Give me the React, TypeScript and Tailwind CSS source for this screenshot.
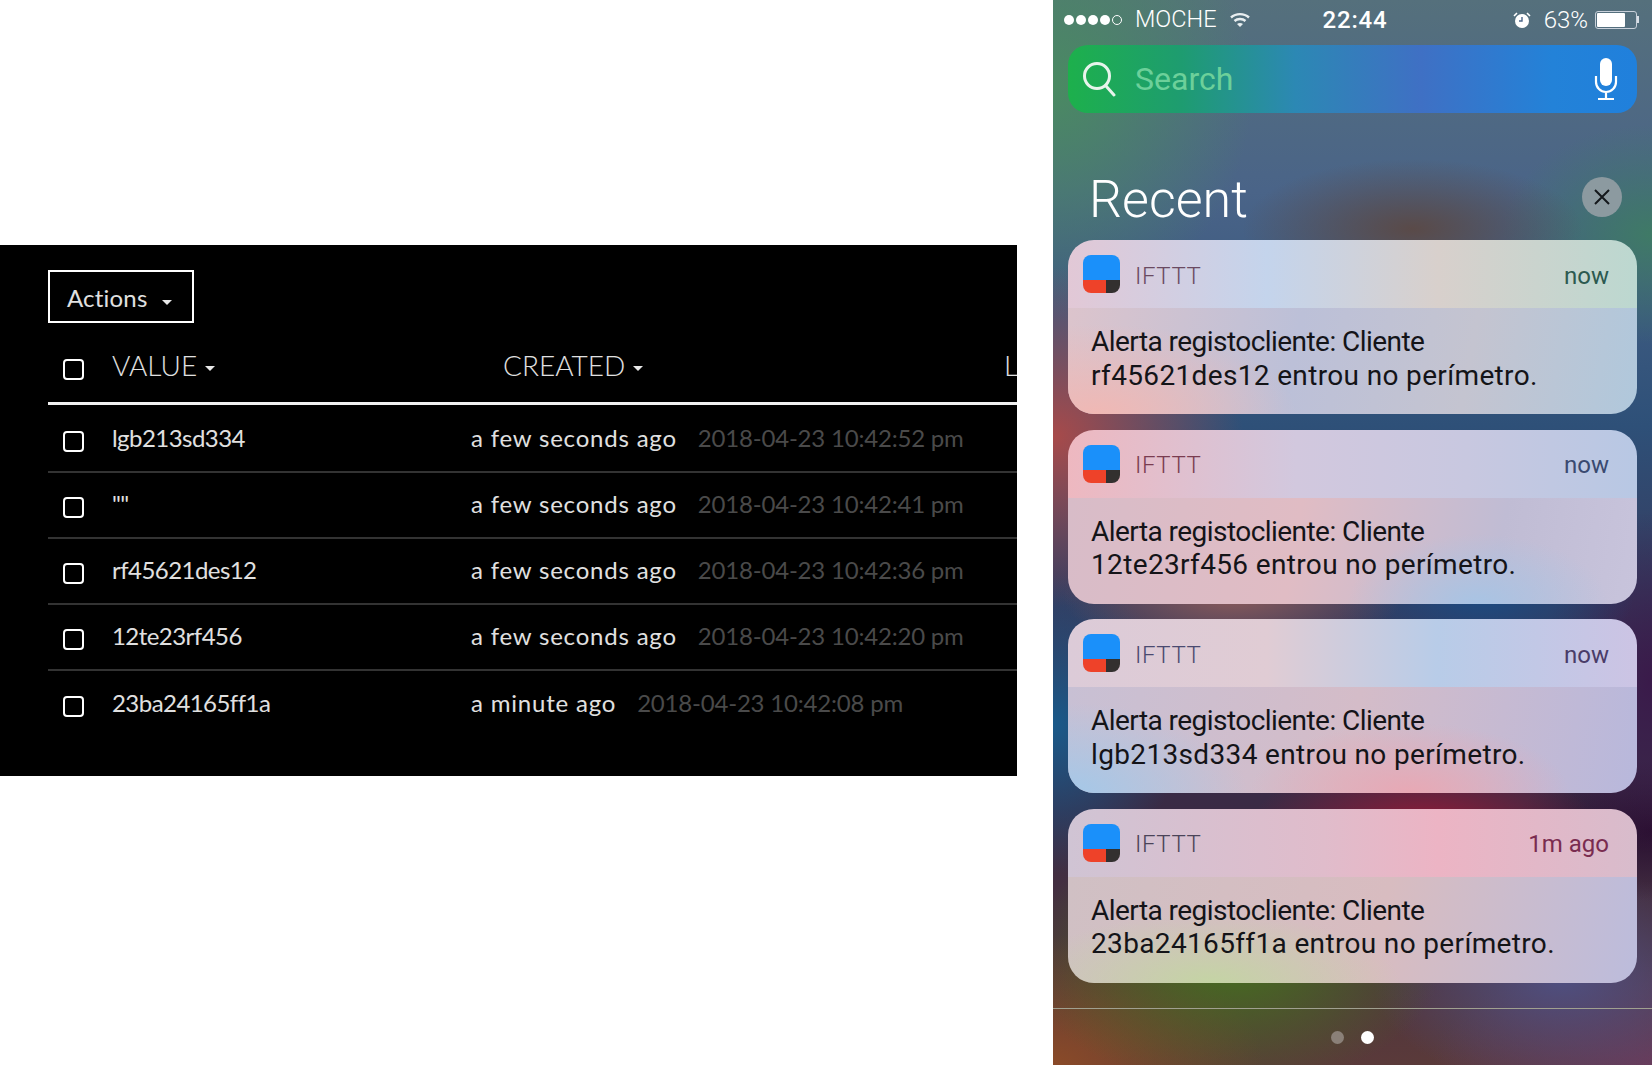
import clsx from 'clsx'

const rows = [
  { value: 'lgb213sd334', ago: 'a few seconds ago', date: '2018-04-23 10:42:52 pm' },
  { value: '""', ago: 'a few seconds ago', date: '2018-04-23 10:42:41 pm' },
  { value: 'rf45621des12', ago: 'a few seconds ago', date: '2018-04-23 10:42:36 pm' },
  { value: '12te23rf456', ago: 'a few seconds ago', date: '2018-04-23 10:42:20 pm' },
  { value: '23ba24165ff1a', ago: 'a minute ago', date: '2018-04-23 10:42:08 pm' },
]

const cards = [
  {
    id: 'rf45621des12',
    time: 'now',
    top: 'bg-[linear-gradient(90deg,#e2c8d6_0%,#c4d4ec_35%,#d8d0cc_65%,#bcd8d0_100%)]',
    body: 'bg-[radial-gradient(ellipse_200px_90px_at_5%_100%,#f0b8b4_0%,transparent_100%),linear-gradient(100deg,#dcc4cc_0%,#bcc0d8_40%,#c4c4d0_70%,#b0c8dc_100%)]',
    timeColor: 'text-[#2c5a50]',
    nameColor: 'text-[#6a4a62]',
  },
  {
    id: '12te23rf456',
    time: 'now',
    top: 'bg-[linear-gradient(90deg,#eeb8c0_0%,#d2c8de_40%,#c8c8e0_70%,#b8c8e4_100%)]',
    body: 'bg-[radial-gradient(ellipse_130px_70px_at_72%_100%,#a8c4e4_0%,transparent_100%),linear-gradient(100deg,#d8bcc8_0%,#e0bcc4_40%,#c0bcd4_75%,#c8c4dc_100%)]',
    timeColor: 'text-[#3a4a70]',
    nameColor: 'text-[#7a3c50]',
  },
  {
    id: 'lgb213sd334',
    time: 'now',
    top: 'bg-[linear-gradient(90deg,#dccbd8_0%,#e0ccd4_35%,#b8cce8_65%,#ccc4e4_100%)]',
    body: 'bg-[radial-gradient(ellipse_160px_70px_at_60%_100%,#e8a8b4_0%,transparent_100%),radial-gradient(ellipse_180px_90px_at_0%_100%,#a4c8e8_0%,transparent_100%),linear-gradient(100deg,#c8c0d4_0%,#d4bcc8_50%,#b8b8dc_100%)]',
    timeColor: 'text-[#4a3c68]',
    nameColor: 'text-[#4a4a70]',
  },
  {
    id: '23ba24165ff1a',
    time: '1m ago',
    top: 'bg-[linear-gradient(90deg,#d0c4d4_0%,#e0bccb_45%,#ecb4c4_65%,#d8bccc_100%)]',
    body: 'bg-[radial-gradient(ellipse_190px_70px_at_25%_100%,#c4d4a4_0%,transparent_100%),linear-gradient(100deg,#d0c0c4_0%,#d8bcc0_55%,#bcbcdc_100%)]',
    timeColor: 'text-[#7a2c50]',
    nameColor: 'text-[#4a4458]',
  },
]

function Caret({ className }: { className: string }) {
  return <span className={clsx('inline-block border-x-[5px] border-t-[5px] border-x-transparent border-t-[#e8e8e8]', className)} />
}

function Checkbox() {
  return <span className="block w-[21px] h-[21px] shrink-0 rounded-[4px] border-2 border-white" />
}

function IftttIcon() {
  return (
    <svg width="37" height="38" viewBox="0 0 37 38" className="shrink-0">
      <defs>
        <clipPath id="app-icon">
          <rect width="37" height="38" rx="8" />
        </clipPath>
      </defs>
      <g clipPath="url(#app-icon)">
        <rect width="37" height="25" fill="#1a90fa" />
        <rect y="25" width="23" height="13" fill="#ee4229" />
        <rect x="23" y="25" width="14" height="13" fill="#33302f" />
      </g>
    </svg>
  )
}

function Notification({ card }: { card: (typeof cards)[number] }) {
  return (
    <div className="rounded-[26px] overflow-hidden h-[174px]">
      <div className={clsx('h-[68px] flex items-center pl-[15px] pr-[28px] pt-[3px]', card.top)}>
        <span className="-mt-[3px]"><IftttIcon /></span>
        <span className={clsx('ml-[15px] text-[24px] tracking-wide font-light', card.nameColor)}>IFTTT</span>
        <span className={clsx('ml-auto text-[24px]', card.timeColor)}>{card.time}</span>
      </div>
      <div className={clsx('h-[106px] pl-[23px] pt-[17px] text-[28px] leading-[33.5px] text-[#141418]', card.body)}>
        <p className="tracking-[-0.55px]">Alerta registocliente: Cliente</p>
        <p className="tracking-[0.35px]">{card.id} entrou no perímetro.</p>
      </div>
    </div>
  )
}

export default function App() {
  return (
    <div className="w-[1652px] h-[1065px] overflow-hidden bg-white flex">
      {/* Dashboard table */}
      <div className="w-[1053px] shrink-0 pt-[245px]">
        <div className="w-[1017px] h-[531px] bg-black overflow-hidden pl-[48px] pt-[25px] font-['Lato',sans-serif] text-[24px] text-[#e0e0e0]">
          <button className="w-[146px] h-[53px] border-2 border-white flex items-center pl-[17px] pt-[2px] tracking-[0.2px] text-[24px] text-[#e0e0e0] whitespace-nowrap">
            Actions
            <Caret className="ml-[14px] mt-[9px]" />
          </button>

          <div className="mt-[15px] h-[67px] pb-[11px] flex items-center border-b-[3px] border-[#f0f0f0] whitespace-nowrap">
            <span className="ml-[15px] mt-[9px]"><Checkbox /></span>
            <span className="ml-[28px] shrink-0 text-[28px] font-light flex items-center w-[391px]">VALUE<Caret className="ml-[8px] mt-[8px]" /></span>
            <span className="shrink-0 text-[28px] font-light flex items-center w-[501px]">CREATED<Caret className="ml-[8px] mt-[8px]" /></span>
            <span className="shrink-0 text-[28px] font-light">L</span>
          </div>

          <div className="mt-[2px]">
            {rows.map((row, i) => (
              <div key={row.value} className={clsx('h-[66px] pb-[3px] flex items-center whitespace-nowrap', i < rows.length - 1 && 'border-b-2 border-[#333]')}>
                <span className="ml-[15px] mt-[8px]"><Checkbox /></span>
                <span className="ml-[28px] w-[359px] shrink-0 tracking-[-0.55px]">{row.value}</span>
                <span className="tracking-[0.8px]">{row.ago}</span>
                <span className="ml-[21px] text-[#4a4a4a] tracking-[-0.2px]">{row.date}</span>
              </div>
            ))}
          </div>
        </div>
      </div>

      {/* Phone notification centre */}
      <div className="w-[599px] shrink-0 px-[15px] font-['Roboto',sans-serif] bg-[radial-gradient(ellipse_170px_70px_at_60%_21.5%,#5a4a48_0%,transparent_100%),radial-gradient(ellipse_150px_110px_at_100%_22%,#3f7a66_0%,transparent_100%),radial-gradient(ellipse_190px_170px_at_0%_41%,#a84a4a_0%,transparent_100%),radial-gradient(ellipse_170px_60px_at_30%_56%,#8a5a5a_0%,transparent_100%),radial-gradient(ellipse_130px_150px_at_0%_68%,#1a5a8a_0%,transparent_100%),radial-gradient(ellipse_150px_70px_at_72%_56%,#1c4a80_0%,transparent_100%),radial-gradient(ellipse_110px_170px_at_100%_64%,#3a1a4a_0%,transparent_100%),radial-gradient(ellipse_170px_60px_at_62%_77%,#8a1c38_0%,transparent_100%),radial-gradient(ellipse_140px_70px_at_100%_78%,#2a0f30_0%,transparent_100%),radial-gradient(ellipse_210px_130px_at_30%_90%,#46701e_0%,transparent_100%),radial-gradient(ellipse_210px_130px_at_0%_100%,#8a4a28_0%,transparent_100%),radial-gradient(ellipse_190px_110px_at_85%_92%,#4f4f80_0%,transparent_100%),radial-gradient(ellipse_220px_110px_at_100%_100%,#6a3a58_0%,transparent_100%),radial-gradient(ellipse_200px_230px_at_0%_8%,#4a8a62_0%,transparent_100%),linear-gradient(180deg,#55707c_0%,#4a6488_18%,#2e5078_40%,#3a3050_65%,#3a2a44_76%,#5a3a3a_100%)]">
        <div className="h-[45px] pb-[6px] -ml-[4px] -mr-[2px] flex items-center text-white whitespace-nowrap">
          <span className="flex items-center gap-[2px]">
            {[0, 1, 2, 3].map(i => <span key={i} className="w-[10px] h-[10px] rounded-full bg-white" />)}
            <span className="w-[10px] h-[10px] rounded-full border border-white" />
          </span>
          <span className="ml-[13px] text-[23.5px] font-light">MOCHE</span>
          <svg width="20" height="16" viewBox="0 0 20 16" className="ml-[13px]" fill="none" stroke="#e8eef0" strokeWidth="2.4">
            <path d="M1 5.5C6 1 14 1 19 5.5" />
            <path d="M4.5 9c3-2.6 8-2.6 11 0" />
            <path d="M10 15l-3-3c1.7-1.3 4.3-1.3 6 0z" fill="#e8eef0" stroke="none" />
          </svg>
          <span className="ml-[73px] text-[24px] font-medium tracking-[0.8px]">22:44</span>
          <svg width="18" height="18" viewBox="0 0 18 18" className="ml-auto">
            <circle cx="9" cy="10" r="7" fill="#fff" />
            <path d="M9 6v4h-3" fill="none" stroke="#4a6488" strokeWidth="1.4" />
            <path d="M1 5l3-3M17 5l-3-3" stroke="#fff" strokeWidth="1.6" />
          </svg>
          <span className="ml-[13px] text-[24px] font-light">63%</span>
          <span className="ml-[7px] w-[42px] h-[18px] rounded-[3px] border border-[#c8d0da] p-[1px] block">
            <span className="block w-[28px] h-full bg-white rounded-[1px]" />
          </span>
          <span className="w-[2px] h-[7px] bg-[#d8dee6]" />
        </div>

        <div className="h-[68px] rounded-[20px] flex items-center pl-[14px] pr-[19px] bg-[linear-gradient(90deg,#1db04c_0%,#1e9c70_20%,#2c88b4_40%,#3f70c4_62%,#2382d8_85%,#2080dc_100%)]">
          <svg width="34" height="36" viewBox="0 0 34 36" fill="none" stroke="#e8f4ec" strokeWidth="3">
            <circle cx="15" cy="15" r="12.5" />
            <path d="M24 25l8 9" strokeLinecap="round" />
          </svg>
          <span className="ml-[19px] text-[32px] text-[#6cd09a]">Search</span>
          <svg width="24" height="42" viewBox="0 0 24 42" className="ml-auto" fill="none">
            <rect x="6" y="0" width="12" height="28" rx="6" fill="#fff" />
            <path d="M2 18v6a10 10 0 0 0 20 0v-6M12 34v6M4 41h16" stroke="#fff" strokeWidth="2.2" />
          </svg>
        </div>

        <div className="h-[127px] flex items-center justify-between pl-[21px] pr-[15px] pt-[47px]">
          <h2 className="text-[52px] font-light text-white">Recent</h2>
          <span className="-mt-[6px] w-[40px] h-[40px] rounded-full bg-[#8c9aa0] flex items-center justify-center">
            <svg width="18" height="18" viewBox="0 0 18 18" stroke="#14181c" strokeWidth="2">
              <path d="M2 2l14 14M16 2L2 16" />
            </svg>
          </span>
        </div>

        <div className="flex flex-col gap-[15.5px]">
          {cards.map(card => <Notification key={card.id} card={card} />)}
        </div>

        <div className="mt-[25px] -mx-[15px] border-t border-[#a0a090] pt-[22px] flex justify-center gap-[17px]">
          <span className="w-[13px] h-[13px] rounded-full bg-[#8a8078]" />
          <span className="w-[13px] h-[13px] rounded-full bg-white" />
        </div>
      </div>
    </div>
  )
}
